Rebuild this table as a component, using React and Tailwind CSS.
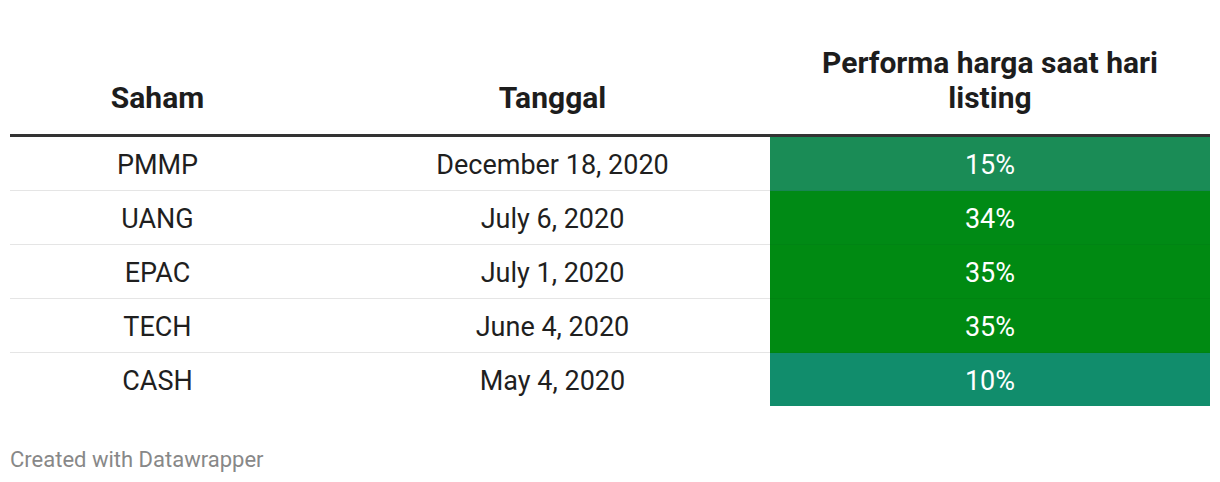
export default function App() {
  const rows = [
    { s: "PMMP", d: "December 18, 2020", p: "15%", c: "bg-[#1a8c56]" },
    { s: "UANG", d: "July 6, 2020", p: "34%", c: "bg-[#008a15]" },
    { s: "EPAC", d: "July 1, 2020", p: "35%", c: "bg-[#008a12]" },
    { s: "TECH", d: "June 4, 2020", p: "35%", c: "bg-[#008a12]" },
    { s: "CASH", d: "May 4, 2020", p: "10%", c: "bg-[#118d6c]" },
  ];
  return (
    <div className="w-[1220px] h-[482px] bg-white px-[10px] pt-[45px] text-[#1f1f1f]" style={{ fontFamily: "Roboto, 'Liberation Sans', sans-serif" }}>
      <div className="flex items-end border-b-[3px] border-[#333] pb-[19px] text-[30px] font-bold leading-[35px] text-[#1d1d1d]">
        <div className="w-[295px] text-center">Saham</div>
        <div className="w-[465px] text-center pl-[30px]">Tanggal</div>
        <div className="w-[440px] text-center px-[30px]">Performa harga saat hari listing</div>
      </div>
      {rows.map((r, i) => (
        <div key={i} className={`flex ${i < 4 ? "h-[54px] border-b border-[rgba(0,0,0,0.1)]" : "h-[53px]"} text-[27px]`}>
          <div className="w-[295px] flex items-center justify-center pt-[4px]">{r.s}</div>
          <div className="w-[465px] flex items-center justify-center pl-[30px] pt-[4px]">{r.d}</div>
          <div className={`w-[440px] flex items-center justify-center pt-[4px] text-white ${r.c} ${i < 4 ? "-mb-px border-b border-[rgba(0,0,0,0.04)]" : ""}`}>{r.p}</div>
        </div>
      ))}
      <div className="mt-[37px] text-[22px] text-[#888]">Created with Datawrapper</div>
    </div>
  );
}
